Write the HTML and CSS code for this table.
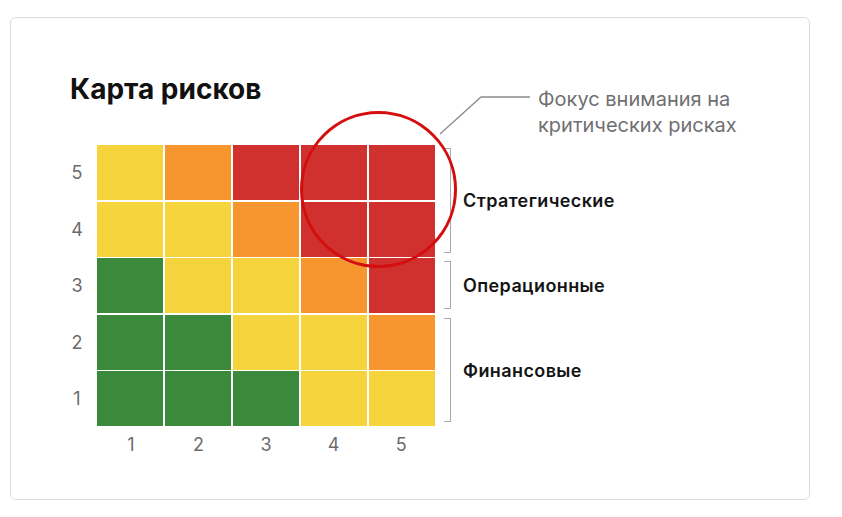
FILE: index.html
```html
<!DOCTYPE html>
<html lang="ru">
<head>
<meta charset="utf-8">
<title>Карта рисков</title>
<link rel="stylesheet" href="styles.css">
</head>
<body>
<div class="card">
  <div class="header">
    <h1 class="title">Карта рисков</h1>
    <div class="callout">Фокус внимания на<br>критических рисках</div>
  </div>
  <div class="chart">
    <div class="yaxis">
      <span>5</span><span>4</span><span>3</span><span>2</span><span>1</span>
    </div>
    <div class="matrix">
      <div class="cell y"></div><div class="cell o"></div><div class="cell r"></div><div class="cell r"></div><div class="cell r"></div>
      <div class="cell y"></div><div class="cell y"></div><div class="cell o"></div><div class="cell r"></div><div class="cell r"></div>
      <div class="cell g"></div><div class="cell y"></div><div class="cell y"></div><div class="cell o"></div><div class="cell r"></div>
      <div class="cell g"></div><div class="cell g"></div><div class="cell y"></div><div class="cell y"></div><div class="cell o"></div>
      <div class="cell g"></div><div class="cell g"></div><div class="cell g"></div><div class="cell y"></div><div class="cell y"></div>
    </div>
    <div class="side">
      <div class="group span2"><div class="bracket"></div><div class="label">Стратегические</div></div>
      <div class="group span1"><div class="bracket"></div><div class="label">Операционные</div></div>
      <div class="group span2"><div class="bracket"></div><div class="label">Финансовые</div></div>
    </div>
  </div>
  <div class="xaxis">
    <span>1</span><span>2</span><span>3</span><span>4</span><span>5</span>
  </div>
  <div class="focus"></div>
  <svg class="leader" width="110" height="50" viewBox="0 0 110 50">
    <polyline points="100,7 51,7 10,44" fill="none" stroke="#8c8c8c" stroke-width="1.3"/>
  </svg>
</div>
</body>
</html>
```
FILE: styles.css
```css
html, body {
  margin: 0;
  padding: 0;
  background: #ffffff;
}
body {
  font-family: Inter, "Noto Sans", "DejaVu Sans", sans-serif;
}
.card {
  position: relative;
  box-sizing: border-box;
  margin: 17px 0 0 10px;
  width: 800px;
  height: 483px;
  border: 1px solid #dcdce0;
  border-radius: 6px;
  background: #ffffff;
  padding: 54px 50px 0 59px;
}
.header {
  display: flex;
  justify-content: space-between;
  align-items: flex-start;
  height: 73px;
}
.title {
  margin: 0;
  font-size: 28px;
  line-height: 34px;
  font-weight: 700;
  color: #111111;
  letter-spacing: 0;
}
.callout {
  margin-top: 14px;
  width: 221px;
  font-size: 20px;
  line-height: 26px;
  color: #6f6f72;
  white-space: nowrap;
}
.chart {
  display: flex;
  align-items: flex-start;
}
.yaxis {
  width: 27px;
  height: 281px;
  box-sizing: border-box;
  padding-right: 13px;
  display: grid;
  grid-template-rows: repeat(5, 1fr);
  row-gap: 1.5px;
  font-size: 18px;
  color: #6b6b6e;
}
.yaxis span {
  display: flex;
  align-items: center;
  justify-content: center;
}
.matrix {
  width: 338px;
  height: 281px;
  display: grid;
  grid-template-columns: repeat(5, 1fr);
  grid-template-rows: repeat(5, 1fr);
  gap: 1.5px;
}
.cell.y { background: #f6d43d; }
.cell.o { background: #f7962f; }
.cell.r { background: #d0302e; }
.cell.g { background: #3b8a3c; }
.side {
  margin-left: 9px;
  height: 281px;
  display: grid;
  grid-template-rows: repeat(5, 1fr);
  row-gap: 1.5px;
}
.group {
  display: flex;
  align-items: stretch;
}
.span2 { grid-row: span 2; }
.span1 { grid-row: span 1; }
.bracket {
  width: 6px;
  margin: 3px 0 4px;
  border: 1.5px solid #a9a9ad;
  border-left: none;
  border-radius: 0 1px 1px 0;
}
.label {
  margin-left: 12px;
  display: flex;
  align-items: center;
  font-size: 18px;
  font-weight: 600;
  letter-spacing: 0.4px;
  color: #141414;
}
.xaxis {
  margin: 8px 0 0 27px;
  width: 338px;
  display: grid;
  grid-template-columns: repeat(5, 1fr);
  font-size: 18px;
  line-height: 22px;
  color: #6b6b6e;
  text-align: center;
}
.focus {
  position: absolute;
  left: 289px;
  top: 93px;
  width: 157px;
  height: 157px;
  box-sizing: border-box;
  border: 3px solid #d40e0e;
  border-radius: 50%;
}
.leader {
  position: absolute;
  left: 419px;
  top: 72px;
}
```
